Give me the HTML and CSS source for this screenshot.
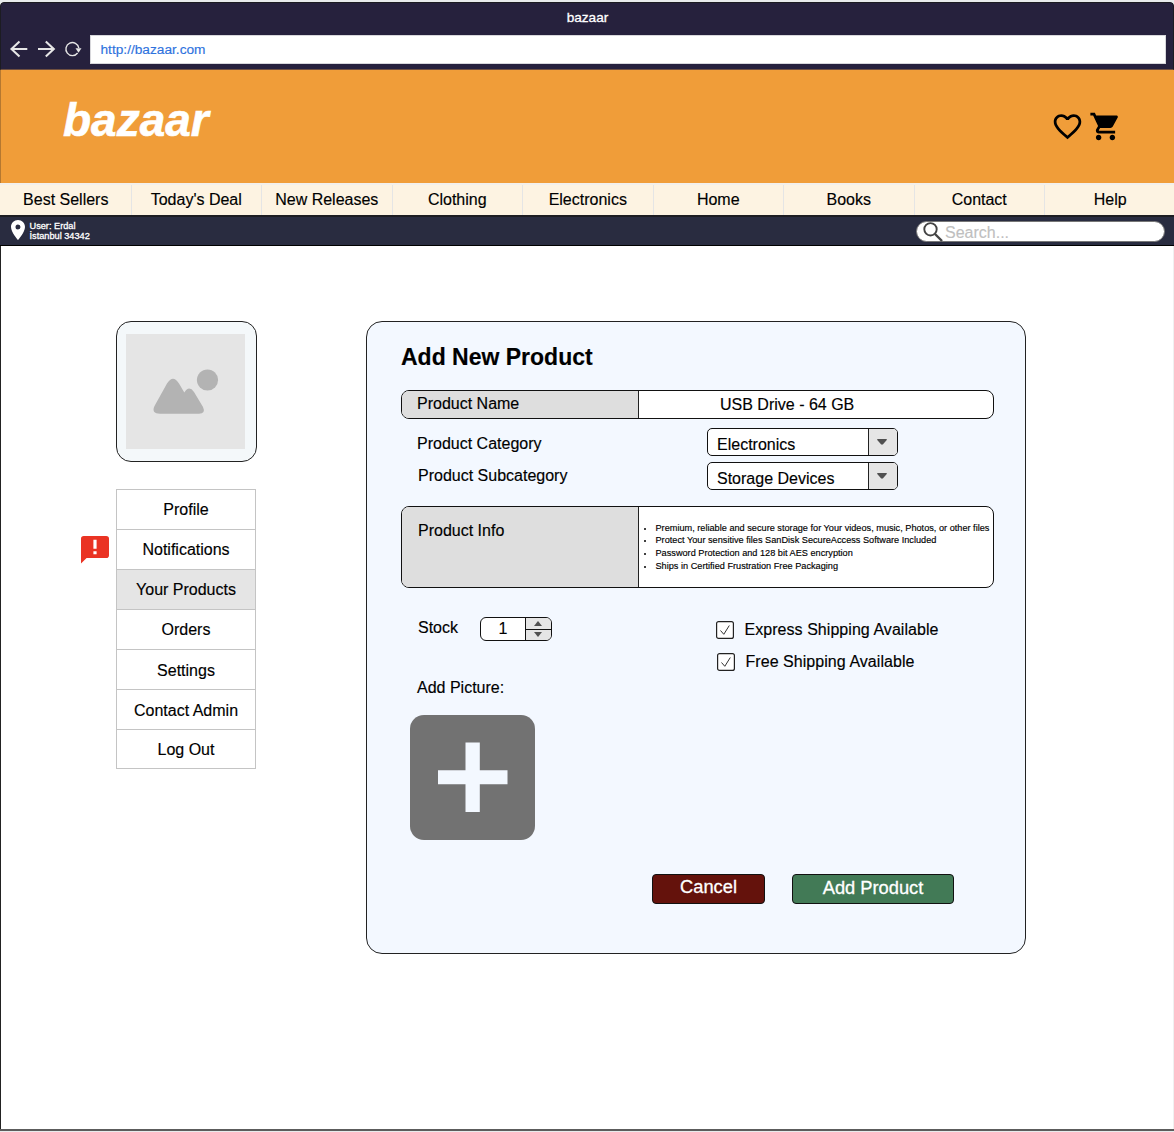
FILE: index.html
```html
<!DOCTYPE html>
<html lang="en">
<head>
<meta charset="utf-8">
<title>bazaar</title>
<link rel="stylesheet" href="styles.css">
</head>
<body>
<div class="window">
  <header class="chrome">
    <div class="chrome-title">bazaar</div>
    <div class="chrome-bar">
      <svg class="chrome-icons" width="90" height="30" viewBox="0 0 90 30" fill="none" stroke="#e6e6e6" stroke-width="2.100">
        <path d="M27.300 14H12M19.500 6.500L11.500 14L19.500 21.500M38 14H53M45.800 6.500L53.800 14L45.800 21.500"/>
        <path d="M77.600 18A6.500 6.500 0 1 1 78.800 13" stroke-width="1.400"/>
        <path d="M75.500 13.300H81.500L78.500 17.800Z" fill="#e6e6e6" stroke="none"/>
      </svg>
      <div class="url">http://bazaar.com</div>
    </div>
  </header>

  <div class="banner">
    <div class="logo">bazaar</div>
    <div class="banner-icons">
      <svg width="33" height="33" viewBox="0 0 24 24"><path d="M16.500 3c-1.740 0-3.410.810-4.500 2.090C10.910 3.810 9.240 3 7.500 3 4.420 3 2 5.420 2 8.500c0 3.780 3.400 6.860 8.550 11.540L12 21.350l1.450-1.320C18.600 15.360 22 12.280 22 8.500 22 5.420 19.580 3 16.500 3zm-4.400 15.550l-.1.100-.1-.1C7.140 14.240 4 11.390 4 8.500 4 6.500 5.500 5 7.500 5c1.540 0 3.040.990 3.570 2.360h1.870C13.460 5.990 14.960 5 16.500 5c2 0 3.500 1.500 3.500 3.500 0 2.890-3.140 5.740-7.900 10.050z"/></svg>
      <svg width="33" height="33" viewBox="0 0 24 24"><path d="M7 18c-1.100 0-1.990.900-1.990 2S5.900 22 7 22s2-.9 2-2-.9-2-2-2zM1 2v2h2l3.600 7.590-1.350 2.450c-.16.280-.25.610-.25.960 0 1.100.900 2 2 2h12v-2H7.420c-.14 0-.25-.11-.25-.25l.030-.12.900-1.630h7.450c.750 0 1.410-.41 1.750-1.030l3.580-6.490c.080-.14.120-.31.120-.48 0-.55-.45-1-1-1H5.210l-.94-2H1zm16 16c-1.100 0-1.990.900-1.990 2s.890 2 1.990 2 2-.9 2-2-.9-2-2-2z"/></svg>
    </div>
  </div>

  <nav class="nav">
    <a>Best Sellers</a><a>Today's Deal</a><a>New Releases</a><a>Clothing</a><a>Electronics</a><a>Home</a><a>Books</a><a>Contact</a><a>Help</a>
  </nav>

  <div class="subbar">
    <svg width="14" height="20" viewBox="0 0 14 20"><path fill="#fff" fill-rule="evenodd" d="M7 0C3.100 0 0 3.100 0 7c0 5.200 7 13 7 13s7-7.800 7-13c0-3.900-3.100-7-7-7zm0 9.500a2.500 2.500 0 1 1 0-5 2.500 2.500 0 0 1 0 5z"/></svg>
    <div class="place">User: Erdal<br>İstanbul 34342</div>
    <div class="search">
      <svg width="20" height="20" viewBox="0 0 20 20" fill="none" stroke="#444"><circle cx="7.500" cy="7.300" r="6.200" stroke-width="1.900"/><path d="M12 12L19 19" stroke-width="2.400"/></svg>
      <span>Search...</span>
    </div>
  </div>

  <main class="content">
    <aside class="side">
      <div class="avatar">
        <svg width="119" height="115" viewBox="0 0 119 115"><path fill="#e5e5e5" d="M0 0H119V115H0Z"/><g fill="#b3b3b3"><circle cx="81.500" cy="46" r="10.600"/><path d="M28.500 72L41 49.500Q47 40 53 49.500L58.300 58.500Q63 51 68 58L77 73Q80 79.500 73 79.700H34Q25 79.500 28.500 72Z"/></g></svg>
      </div>
      <ul class="menu">
        <li>Profile</li>
        <li>Notifications
          <svg class="alert" width="28" height="28" viewBox="0 0 28 28"><path fill="#ea3323" d="M2.800 0H25.200Q28 0 28 2.800V19.200Q28 22 25.200 22H5.600L0 27.500V2.800Q0 0 2.800 0Z"/><path fill="#fff" d="M12.400 3.700H15.600V12.800H12.400ZM12.400 15.200H15.600V18.200H12.400Z"/></svg>
        </li>
        <li class="active">Your Products</li>
        <li>Orders</li>
        <li class="low">Settings</li>
        <li class="low">Contact Admin</li>
        <li class="last">Log Out</li>
      </ul>
    </aside>

    <section class="card">
      <h1>Add New Product</h1>
      <div class="field name-field">
        <div class="label">Product Name</div>
        <div class="value">USB Drive - 64 GB</div>
      </div>
      <div class="pick first">
        <span>Product Category</span>
        <div class="select"><span>Electronics</span><i><svg width="10" height="6" viewBox="0 0 10 6"><path fill="#505050" d="M0 .8Q0 0 1 0H9Q10 0 10 .8L6 5.300Q5 6 4 5.300Z"/></svg></i></div>
      </div>
      <div class="pick second">
        <span>Product Subcategory</span>
        <div class="select"><span>Storage Devices</span><i><svg width="10" height="6" viewBox="0 0 10 6"><path fill="#505050" d="M0 .8Q0 0 1 0H9Q10 0 10 .8L6 5.300Q5 6 4 5.300Z"/></svg></i></div>
      </div>
      <div class="field info-field">
        <div class="label">Product Info</div>
        <ul class="bullets">
          <li>Premium, reliable and secure storage for Your videos, music, Photos, or other files</li>
          <li>Protect Your sensitive files SanDisk SecureAccess Software Included</li>
          <li>Password Protection and 128 bit AES encryption</li>
          <li>Ships in Certified Frustration Free Packaging</li>
        </ul>
      </div>
      <div class="options">
        <span class="stock-label">Stock</span>
        <div class="stepper">
          <span>1</span>
          <div class="steps">
            <i><svg width="8" height="5" viewBox="0 0 8 5"><path fill="#505050" d="M0 5L4 0L8 5Z"/></svg></i>
            <i><svg width="8" height="5" viewBox="0 0 8 5"><path fill="#505050" d="M0 0H8L4 5Z"/></svg></i>
          </div>
        </div>
        <div class="checks">
          <div class="check"><svg width="18" height="18" viewBox="0 0 18 18" fill="none"><rect x=".6" y=".6" width="16.800" height="16.800" rx="2" fill="#fff" stroke="#222" stroke-width="1.200"/><path d="M4.500 9.500L7.800 13.300L13.300 4.500" stroke="#333"/></svg>Express Shipping Available</div>
          <div class="check shifted"><svg width="18" height="18" viewBox="0 0 18 18" fill="none"><rect x=".6" y=".6" width="16.800" height="16.800" rx="2" fill="#fff" stroke="#222" stroke-width="1.200"/><path d="M4.500 9.500L7.800 13.300L13.300 4.500" stroke="#333"/></svg>Free Shipping Available</div>
        </div>
      </div>
      <div class="picture-label">Add Picture:</div>
      <svg class="picture" width="125" height="125" viewBox="0 0 125 125"><rect width="125" height="125" rx="14" fill="#727272"/><path fill="#f3f8ff" d="M55.500 27.500H69.800V55.200H97.500V69.200H69.800V97H55.500V69.200H28V55.200H55.500Z"/></svg>
      <div class="actions">
        <div class="button cancel">Cancel</div>
        <div class="button add">Add Product</div>
      </div>
    </section>
  </main>
</div>
</body>
</html>
```
FILE: styles.css
```css
* { box-sizing: border-box; }
body {
  margin: 0;
  padding-top: 2px;
  height: 1132px;
  overflow: hidden;
  background: #e8ebec;
  color: #000;
  font: 16px/20px "Liberation Sans", Arial, sans-serif;
  -webkit-text-stroke: 0.15px;
}
svg { display: block; flex: none; }
ul { margin: 0; padding: 0; list-style: none; }

.window {
  display: flex;
  flex-direction: column;
  height: 1129px;
  border-bottom: 2px solid #5c5c5c;
  border-radius: 4px 4px 0 0;
  overflow: hidden;
  background: #fff;
}

.chrome {
  height: 68px;
  border: 1px solid #1c1c22;
  border-bottom-color: #70503f;
  border-radius: 4px 4px 0 0;
  background: #26213d;
}
.chrome-title {
  height: 32px;
  padding: 5px 0 0 1px;
  text-align: center;
  color: #fff;
  font-size: 13.600px;
  -webkit-text-stroke: 0.3px;
}
.chrome-bar { display: flex; padding-right: 7px; }
.chrome-icons { margin-left: -1px; }
.url {
  flex: 1;
  height: 29px;
  padding-left: 9.500px;
  border: 1px solid #d8d8dc;
  background: #fff;
  color: #2e72de;
  font-size: 13.700px;
  line-height: 27px;
}

.banner {
  display: flex;
  justify-content: space-between;
  height: 113px;
  padding: 25px 52px 0 62px;
  border-left: 1px solid #b57830;
  background: #f09d39;
}
.logo {
  color: #fff;
  font-size: 46px;
  line-height: 50px;
  font-weight: bold;
  font-style: italic;
  -webkit-text-stroke: 0.6px;
}
.banner-icons { display: flex; gap: 5px; padding-top: 15px; }

.nav {
  display: grid;
  grid-template-columns: repeat(9, 130.500px);
  height: 32px;
  padding-left: 1px;
  border-top: 2px solid #f3f0ec;
  background: #fdf3e2;
}
.nav a {
  padding-top: 5px;
  border-right: 1px solid #e5e5e5;
  text-align: center;
}
.nav a:last-child { border-right: 0; }

.subbar {
  display: flex;
  height: 31px;
  padding: 4px 9px 0 11px;
  border-top: 2px solid #1d1d22;
  border-bottom: 1px solid #000;
  background: #292c40;
}
.subbar > svg { margin-top: -1px; }
.place {
  padding: 0 0 0 4.500px;
  color: #fff;
  font-size: 9.200px;
  line-height: 10px;
  -webkit-text-stroke: 0.3px;
}
.search {
  display: flex;
  width: 249px;
  height: 21px;
  margin-left: auto;
  padding-left: 6px;
  border: 1px solid #777;
  border-radius: 11px;
  background: #fff;
  color: #bfbfbf;
}
.search span { padding: 1px 0 0 2px; }

.content {
  flex: 1;
  display: flex;
  align-items: flex-start;
  gap: 109px;
  padding: 75px 0 0 115px;
  border-left: 1px solid #222;
  border-right: 1px solid #f0f0f0;
}
.side { width: 141px; }
.avatar {
  height: 141px;
  padding: 12px 9px;
  border: 1px solid #222;
  border-radius: 15px;
  background: #f4f8fa;
}
.menu {
  width: 140px;
  margin-top: 27px;
  border: 1px solid #c4c4c4;
  border-bottom: 0;
}
.menu li {
  position: relative;
  height: 40px;
  padding-top: 10px;
  border-bottom: 1px solid #c4c4c4;
  text-align: center;
}
.menu .active { background: #e5e5e5; }
.menu .low { padding-top: 11px; }
.menu .last { height: 39px; }
.alert { position: absolute; left: -36px; top: 6px; }

.card {
  width: 660px;
  height: 633px;
  padding: 22px 31px 0 34px;
  border: 1px solid #222;
  border-radius: 16px;
  background: #f3f8ff;
}
h1 { margin: 0; font-size: 23px; line-height: 26px; }
.field {
  display: flex;
  width: 593px;
  border: 1px solid #111;
  border-radius: 8px;
  overflow: hidden;
  background: #fff;
}
.field .label {
  width: 237px;
  flex: none;
  padding-left: 15px;
  border-right: 1px solid #222;
  background: #dedede;
}
.name-field { height: 29px; margin-top: 20px; }
.name-field .label { padding-top: 3px; }
.name-field .value { padding: 4px 0 0 81px; }
.pick {
  display: flex;
  justify-content: space-between;
  height: 28px;
  padding: 0 96px 0 16px;
}
.first { margin-top: 9px; }
.first > span { padding-top: 6px; }
.second { margin-top: 6px; }
.second > span { padding: 4px 0 0 1px; }
.select {
  display: flex;
  width: 191px;
  border: 1px solid #111;
  border-radius: 5px;
  overflow: hidden;
  background: #fff;
}
.select span { flex: 1; padding: 6px 0 0 9px; }
.select i {
  width: 29px;
  padding: 10px 0 0 8px;
  border-left: 1px solid #222;
  background: #e5e5e5;
}
.info-field { height: 82px; margin-top: 16px; }
.info-field .label { padding: 14px 0 0 16px; }
.bullets {
  padding: 14.500px 0 0 16.500px;
  font-size: 9.190px;
  line-height: 12.800px;
  white-space: nowrap;
}
.bullets li { position: relative; }
.bullets li::before {
  content: "";
  position: absolute;
  left: -12px;
  top: 6px;
  width: 2px;
  height: 2px;
  border-radius: 1px;
  background: #000;
}

.options { display: flex; height: 61px; margin-top: 29px; padding-left: 17px; }
.stock-label { width: 62px; padding-top: 1px; }
.stepper {
  display: flex;
  width: 72px;
  height: 24px;
  border: 1px solid #111;
  border-radius: 6px;
  overflow: hidden;
  background: #fff;
}
.stepper > span { flex: 1; padding-top: 1px; text-align: center; }
.steps { width: 26px; border-left: 1px solid #111; background: #e5e5e5; }
.steps i { display: block; height: 11px; padding: 3px 0 0 8px; }
.steps i + i { padding-top: 2px; border-top: 1px solid #111; }
.checks { padding: 3px 0 0 164px; }
.check { display: flex; gap: 10.500px; height: 32px; line-height: 20px; letter-spacing: 0.050px; }
.check svg { margin-top: 1px; }
.shifted { padding-left: 1px; }
.picture-label { padding-left: 16px; }
.picture { margin: 17px 0 0 9px; }

.actions { display: flex; gap: 27px; margin-top: 34px; padding-left: 251px; }
.button {
  height: 30px;
  border: 1px solid #111;
  border-radius: 4px;
  color: #fff;
  font-size: 18.300px;
  text-align: center;
  line-height: 24px;
  -webkit-text-stroke: 0.3px;
}
.cancel { width: 113px; background: #64120c; }
.add { width: 162px; background: #427a56; line-height: 26px; }
```
